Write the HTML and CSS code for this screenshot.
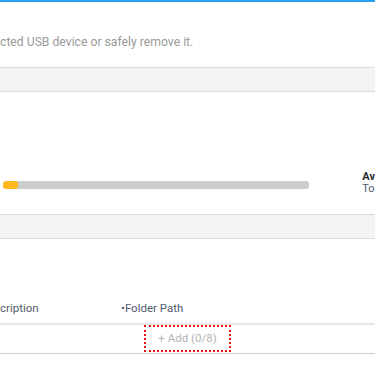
FILE: index.html
```html
<!DOCTYPE html>
<html lang="en">
<head>
    <meta charset="UTF-8">
    <meta name="viewport" content="width=device-width, initial-scale=1.0">
    <title>usb storage</title>
    <link rel="stylesheet" href="styles.css">
</head>
<body>
    <div class="page">
      <div class="notice">
        <p>cted USB device or safely remove it.</p>
      </div>

      <div class="band"></div>

      <div class="usage">
        <div class="usage-row">
          <div class="bar"><div class="bar-fill" style="width: 5%"></div></div>
          <div class="usage-info">
            <span class="avail">Av</span>
            <span class="total">To</span>
          </div>
        </div>
      </div>

      <div class="band"></div>

      <div class="folders">
        <div class="folder-head">
          <span class="col-desc">cription</span>
          <span class="col-path">&bull;Folder Path</span>
        </div>
        <div class="folder-row">
          <button class="add-btn">+ Add (0/8)</button>
        </div>
      </div>

      <div class="band band-last"></div>
    </div>
</body>
</html>
```

FILE: styles.css
```css
html {
    overflow: hidden;
}
body {
    margin: 0;
    font-family: Roboto, "Liberation Sans", sans-serif;
    background: #fff;
    overflow: hidden;
    height: 375px;
}
.page {
    border-top: 2px solid #2a9ff4;
    height: 373px;
    overflow: hidden;
}
.notice {
    height: 65px;
    display: flex;
    align-items: flex-start;
}
.notice p {
    margin: 32px 0 0 0;
    font-size: 12.2px;
    color: #9a9a9a;
    line-height: 16px;
}
.band {
    height: 23px;
    background: #f3f3f3;
    border-top: 1px solid #dcdcdc;
    border-bottom: 1px solid #dcdcdc;
}
.usage {
    height: 122px;
    display: flex;
    align-items: flex-start;
}
.usage-row {
    display: flex;
    align-items: flex-start;
    margin-top: 79px;
    width: 100%;
}
.bar {
    margin: 10px 0 0 3px;
    width: 307px;
    height: 8px;
    background: #cccccc;
    border-radius: 3px;
    overflow: hidden;
}
.bar-fill {
    height: 100%;
    background: #fdb91c;
    border-radius: 3px;
}
.usage-info {
    margin-left: 53px;
    display: flex;
    flex-direction: column;
    font-size: 11px;
    line-height: 12px;
}
.avail {
    font-weight: bold;
    color: #2b2b2b;
}
.total {
    color: #4b5a6e;
}
.folders {
    height: 129px;
}
.folder-head {
    display: flex;
    align-items: flex-start;
    margin-top: 62px;
    height: 22px;
    font-size: 11.5px;
    line-height: 14px;
    color: #4f5b6e;
}
.col-desc {
    width: 121px;
}
.folder-row {
    border-top: 2px solid #e6e6e6;
    border-bottom: 1px solid #cfcfcf;
    height: 28px;
    display: flex;
    justify-content: center;
    align-items: flex-start;
}
.add-btn {
    all: unset;
    box-sizing: border-box;
    width: 87px;
    height: 27px;
    border: 2px dotted #ee1111;
    text-align: center;
    font-size: 11.5px;
    color: #b4b4b4;
    line-height: 23px;
    cursor: pointer;
}
.band-last {
    height: 6px;
    border-bottom: none;
}
```
